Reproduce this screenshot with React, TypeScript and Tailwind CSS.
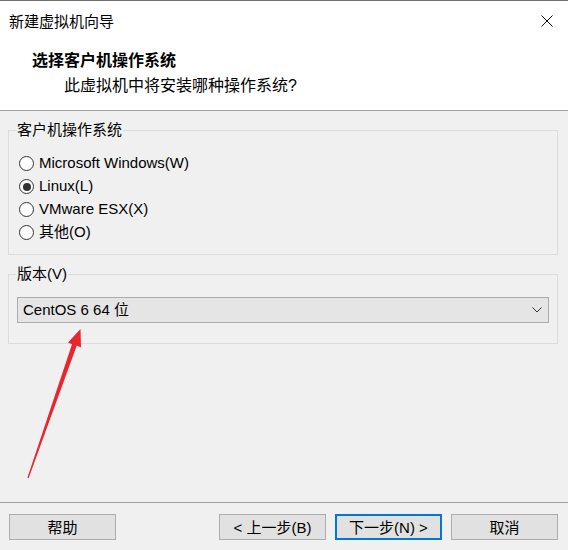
import { useState } from 'react';

const osOptions = [
  { id: 'win', label: 'Microsoft Windows(W)' },
  { id: 'linux', label: 'Linux(L)' },
  { id: 'esx', label: 'VMware ESX(X)' },
  { id: 'other', label: '其他(O)' },
];

function Radio({ checked }: { checked: boolean }) {
  return (
    <span className="w-[15px] h-[15px] rounded-full border border-[#333333] bg-white flex items-center justify-center shrink-0">
      {checked && <span className="w-[8px] h-[8px] rounded-full bg-[#333333]" />}
    </span>
  );
}

function Btn({ label, primary }: { label: string; primary?: boolean }) {
  return (
    <button
      className={`w-[107px] h-[26px] flex items-center justify-center text-[15px] leading-none text-black bg-[#e1e1e1] ${
        primary ? 'border-2 border-[#0078d7]' : 'border border-[#adadad]'
      }`}
    >
      {label}
    </button>
  );
}

export default function App() {
  const [os, setOs] = useState('linux');

  return (
    <div className="relative w-[568px] h-[550px] bg-[#f0f0f0] flex flex-col overflow-hidden text-black font-['Liberation_Sans','Noto_Sans_CJK_SC',sans-serif]">
      {/* header */}
      <div className="bg-white border-t border-[#6e6e6e] border-b border-b-[#a0a0a0] h-[111px]">
        <div className="h-[41px] flex items-center justify-between pl-[9px] pr-[15px]">
          <span className="text-[15px] leading-5">新建虚拟机向导</span>
          <svg width="12" height="12" viewBox="0 0 12 12" className="mt-[-2px]">
            <path d="M0.5 0.5 L11.5 11.5 M11.5 0.5 L0.5 11.5" stroke="#111" strokeWidth="1" />
          </svg>
        </div>
        <div className="mt-[9px] pl-[32px] text-[16px] leading-5 font-bold">选择客户机操作系统</div>
        <div className="mt-[5px] pl-[64px] text-[16px] leading-5">此虚拟机中将安装哪种操作系统?</div>
      </div>

      {/* guest os */}
      <fieldset className="ml-[8px] w-[550px] mt-[9px] border border-[#dcdcdc] px-0 pt-[12px] pb-[10px]">
        <legend className="ml-[7px] px-[1px] text-[15px] leading-5">客户机操作系统</legend>
        <div className="pl-[10px]">
          {osOptions.map((o) => (
            <div key={o.id} className="h-[23px] flex items-center gap-[5px] text-[15px] cursor-default" onClick={() => setOs(o.id)}>
              <Radio checked={os === o.id} />
              <span>{o.label}</span>
            </div>
          ))}
        </div>
      </fieldset>

      {/* version */}
      <fieldset className="ml-[8px] w-[550px] mt-[9px] border border-[#dcdcdc] px-0 pt-[13px] pb-[20px]">
        <legend className="ml-[7px] px-[1px] text-[15px] leading-5">版本(V)</legend>
        <div className="pl-[8px]">
          <div className="w-[532px] h-[26px] bg-[#e5e5e5] border border-[#acacac] flex items-center justify-between pl-[5px] pr-[6px]">
            <span className="text-[15px]">CentOS 6 64 位</span>
            <svg width="10" height="6" viewBox="0 0 10 6">
              <path d="M0.5 0.5 L5 5 L9.5 0.5" stroke="#333" strokeWidth="1" fill="none" />
            </svg>
          </div>
        </div>
      </fieldset>

      {/* footer */}
      <div className="mt-auto h-[48px] border-t border-[#a0a0a0] pt-[11px] pl-[9px] pr-[10px] flex justify-between">
        <Btn label="帮助" />
        <div className="flex gap-[9px]">
          <Btn label="< 上一步(B)" />
          <Btn label="下一步(N) >" primary />
          <Btn label="取消" />
        </div>
      </div>

      {/* red annotation arrow */}
      <svg className="absolute left-0 top-0 pointer-events-none" width="568" height="550" viewBox="0 0 568 550">
        <polygon
          points="80.5,329 81,347.5 76.8,345.6 28.6,478.3 27.4,477.8 72,344.2 68,342.6"
          fill="#e8262d"
        />
      </svg>
    </div>
  );
}
